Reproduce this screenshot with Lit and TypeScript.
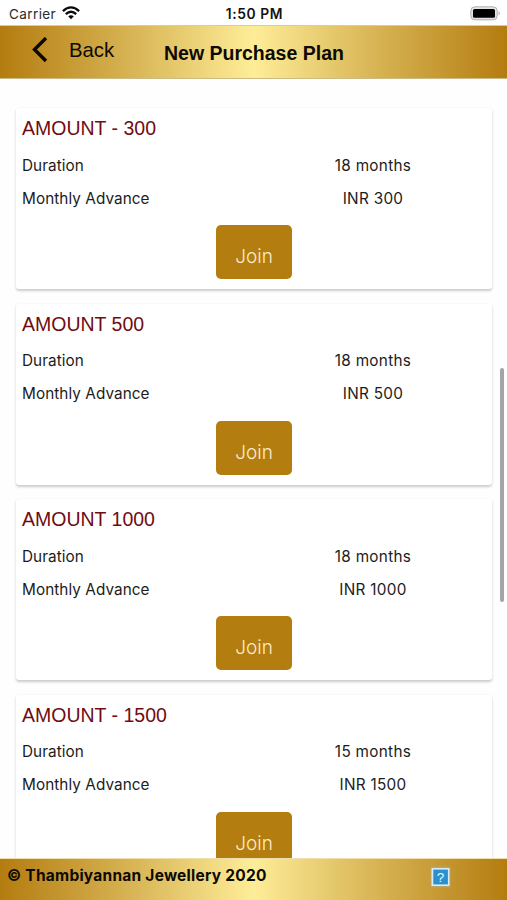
import { LitElement, html, css } from "lit";
import { customElement, property } from "lit/decorators.js";

interface Plan {
  name: string;
  duration: string;
  advance: string;
}

const PLANS: Plan[] = [
  { name: "AMOUNT - 300", duration: "18 months", advance: "INR 300" },
  { name: "AMOUNT 500", duration: "18 months", advance: "INR 500" },
  { name: "AMOUNT 1000", duration: "18 months", advance: "INR 1000" },
  { name: "AMOUNT - 1500", duration: "15 months", advance: "INR 1500" },
];

@customElement("status-bar")
export class StatusBar extends LitElement {
  static styles = css`
    :host {
      display: grid;
      grid-template-columns: 1fr auto 1fr;
      align-items: center;
      height: 25px;
      box-sizing: border-box;
      padding: 3px 6px 0 9px;
      background: #fff;
      color: #111;
      font-size: 13.5px;
      line-height: 20px;
    }
    .carrier {
      display: flex;
      align-items: center;
      gap: 5.5px;
      color: #2b2b2b;
      letter-spacing: 0.4px;
    }
    .wifi {
      display: block;
      margin-top: -3px;
    }
    .time {
      font-weight: 600;
      font-size: 13.8px;
      letter-spacing: 0.6px;
      margin-right: 1px;
    }
    .battery {
      display: block;
      justify-self: end;
      margin-top: -2px;
    }
  `;
  render() {
    return html`
      <div class="carrier">
        <span>Carrier</span>
        <svg class="wifi" width="18" height="14" viewBox="0 0 18 14">
          <g fill="none" stroke="#0a0a0a" stroke-width="2.3">
            <path d="M0.9 5.2 Q9 -2.4 17.1 5.2" />
            <path d="M3.8 8.1 Q9 3.3 14.2 8.1" />
          </g>
          <path d="M6.2 10.3 Q9 8 11.8 10.3 L9 13.3 Z" fill="#0a0a0a" />
        </svg>
      </div>
      <div class="time">1:50 PM</div>
      <svg class="battery" width="31" height="15" viewBox="0 0 31 15">
        <rect x="0.8" y="0.8" width="26.4" height="13" rx="4" fill="#e4e4e4" stroke="#b0b0b0" />
        <rect x="3" y="3" width="22" height="8.8" rx="1.5" fill="#000" />
        <path d="M28.6 5.2 Q31 7.3 28.6 9.4 Z" fill="#a5a5a5" />
      </svg>
    `;
  }
}

@customElement("plan-card")
export class PlanCard extends LitElement {
  @property({ attribute: false }) plan!: Plan;

  static styles = css`
    :host {
      display: flex;
      flex-direction: column;
      box-sizing: border-box;
      height: 181px;
      flex: none;
      padding: 7px 0 0 6px;
      border-radius: 3px;
      background: #fff;
      box-shadow: 0 1.5px 2.5px rgba(0, 0, 0, 0.2);
    }
    .name {
      height: 33.5px;
      color: #700c12;
      font-family: "Liberation Sans", sans-serif;
      font-size: 19.5px;
      line-height: 26px;
    }
    .row {
      display: grid;
      grid-template-columns: 232px 1fr;
      height: 33px;
      color: #1c1c1c;
      font-size: 15.3px;
      line-height: 33px;
      letter-spacing: 0.07px;
    }
    .value {
      text-align: center;
      letter-spacing: 0.3px;
    }
    .join {
      align-self: center;
      width: 76px;
      height: 54px;
      margin: 10.5px 6px 0 0;
      padding: 8px 0 0;
      border: 0;
      border-radius: 5px;
      background: #b37d10;
      color: #fbeccb;
      font: 300 19px/47px "Inter", sans-serif;
    }
  `;
  render() {
    return html`
      <div class="name">${this.plan.name}</div>
      <div class="row"><span>Duration</span><span class="value">${this.plan.duration}</span></div>
      <div class="row"><span>Monthly Advance</span><span class="value">${this.plan.advance}</span></div>
      <button class="join">Join</button>
    `;
  }
}

@customElement("app-root")
export class AppRoot extends LitElement {
  static styles = css`
    :host {
      display: flex;
      flex-direction: column;
      position: relative;
      width: 507px;
      height: 900px;
      overflow: hidden;
      background: #fefefe;
      font-family: "Inter", "Liberation Sans", sans-serif;
    }
    .bar {
      flex: none;
      box-sizing: border-box;
      background: linear-gradient(90deg, #b47c10 0%, #d6b252 25%, #feed98 50%, #d6b252 75%, #b47c10 100%);
      color: #0d0a02;
    }
    .header {
      display: grid;
      grid-template-columns: 132px auto 1fr;
      align-items: center;
      height: 54px;
      padding-left: 32px;
      border-top: 1px solid #e6cb85;
      border-bottom: 1px solid #cdbb86;
      font-family: "Liberation Sans", sans-serif;
    }
    .back {
      display: flex;
      align-items: center;
      gap: 20px;
      font-size: 20.3px;
      margin-top: -4px;
    }
    .title {
      margin: 2px 0 0;
      font-size: 19.5px;
      font-weight: 700;
      white-space: nowrap;
    }
    .plans {
      display: flex;
      flex-direction: column;
      gap: 14.5px;
      flex: 1;
      min-height: 0;
      overflow: hidden;
      padding: 29px 15px 0 16px;
    }
    .scroll {
      position: absolute;
      right: 3.5px;
      top: 368px;
      width: 4px;
      height: 234px;
      border-radius: 2px;
      background: #a4a4a4;
    }
    .footer {
      display: flex;
      justify-content: space-between;
      align-items: flex-start;
      height: 42px;
      padding: 6px 56px 0 7px;
      border-top: 1px solid #f0dfae;
    }
    .copyright {
      font-size: 15.5px;
      font-weight: 700;
      line-height: 22px;
      letter-spacing: 0.24px;
    }
    .help {
      display: block;
      margin-top: 1px;
    }
    .mark {
      font: 400 13.5px "Liberation Sans", sans-serif;
    }
  `;
  render() {
    return html`
      <status-bar></status-bar>
      <header class="bar header">
        <div class="back">
          <svg width="17" height="26" viewBox="0 0 17 26">
            <path d="M14 1 L2.5 12.5 L14 24" fill="none" stroke="#0a0802" stroke-width="3.4" />
          </svg>
          <span>Back</span>
        </div>
        <h1 class="title">New Purchase Plan</h1>
      </header>
      <main class="plans">${PLANS.map((plan) => html`<plan-card .plan=${plan}></plan-card>`)}</main>
      <div class="scroll"></div>
      <footer class="bar footer">
        <span class="copyright">© Thambiyannan Jewellery 2020</span>
        <svg class="help" width="21" height="22" viewBox="0 0 21 22">
          <rect x="0.5" y="0.5" width="20" height="21" fill="#b9a878" opacity="0.7" />
          <rect x="1.5" y="2" width="18" height="18" fill="#d8ecf5" />
          <rect x="3.3" y="3.6" width="14.6" height="14.8" fill="#2c90cc" />
          <text class="mark" x="10.6" y="15.7" text-anchor="middle" fill="#f2faff">?</text>
        </svg>
      </footer>
    `;
  }
}
